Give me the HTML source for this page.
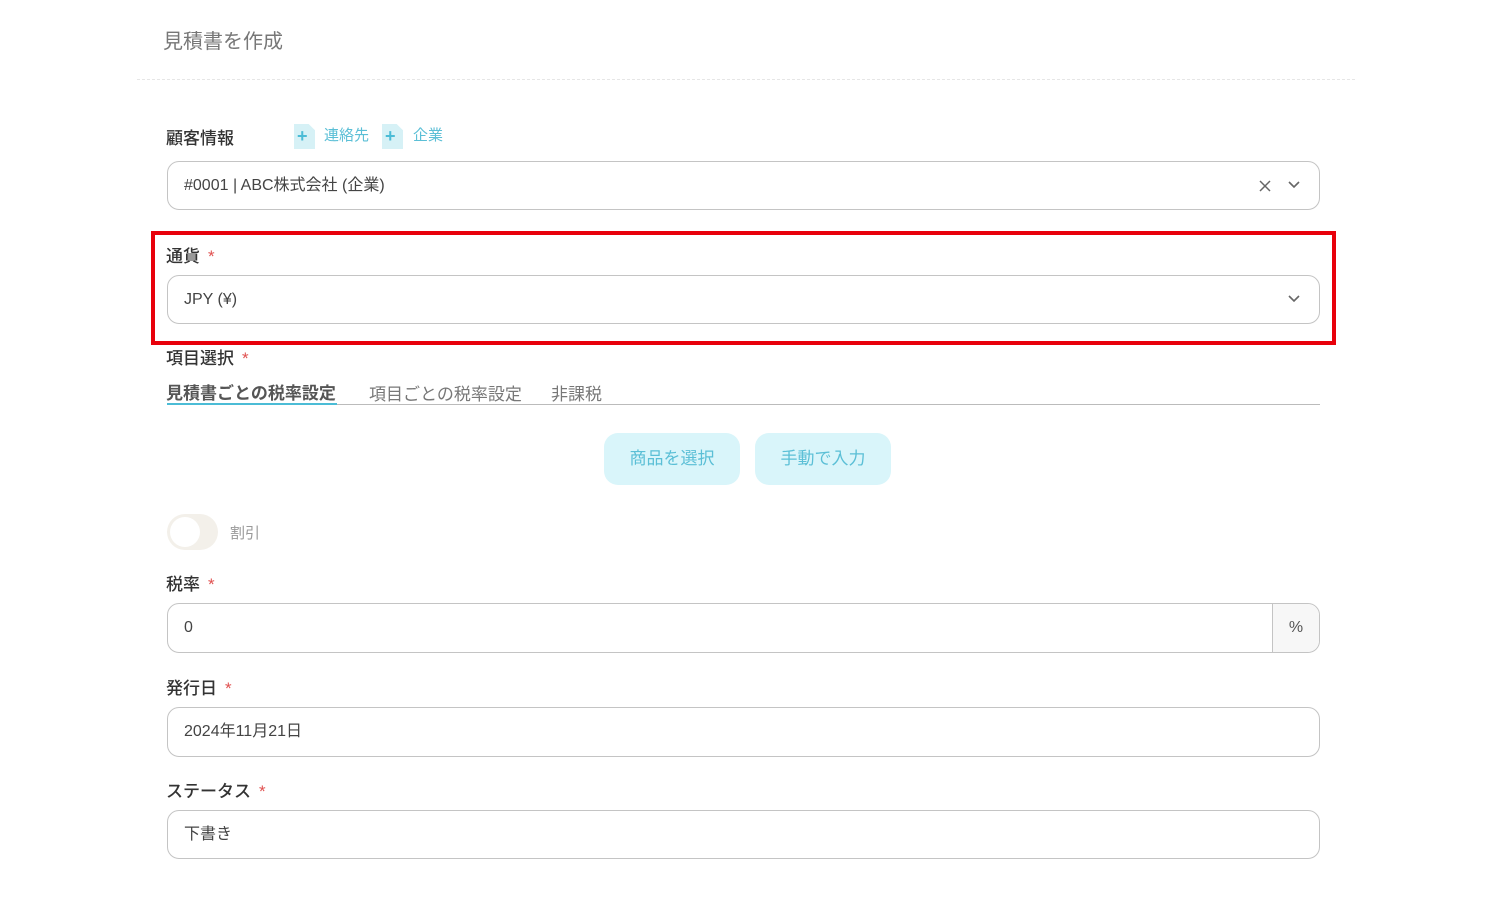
<!DOCTYPE html>
<html><head><meta charset="utf-8"><style>
*{box-sizing:border-box;margin:0;padding:0}
body{width:1500px;height:902px;background:#fff;font-family:"Liberation Sans","Noto Sans CJK JP",sans-serif;position:relative;overflow:hidden;color:#333}
.a{position:absolute}
.lbl{font-size:17px;color:#333;font-weight:500}
.req{color:#e0504f;margin-left:8px}
.inp{position:absolute;left:167px;width:1153px;height:49px;border:1px solid #c4c4c4;border-radius:12px;font-size:16px;color:#444;padding-left:16px;line-height:47px}
.chev{position:absolute;right:18px;top:17px}
.btn{position:absolute;top:433px;width:136px;height:52px;background:#d9f5fa;border-radius:14px;color:#5bbfd6;font-size:17px;text-align:center;line-height:52px}
</style></head><body>
<div class="a" style="left:163px;top:25px;font-size:20px;color:#777">見積書を作成</div>
<div class="a" style="left:137px;top:79px;width:1218px;border-top:1px dashed #e6e6e6"></div>

<div class="a lbl" style="left:166px;top:124px">顧客情報</div>
<div class="a" style="left:294px;top:124px;width:21px;height:25px;background:#d6f1f6;clip-path:polygon(0 0,70% 0,100% 25%,100% 100%,0 100%)"></div>
<div class="a" style="left:297px;top:126px;font-size:18px;color:#4bbcd6;font-weight:bold">+</div>
<div class="a" style="left:324px;top:124px;font-size:15px;color:#5bbfd6">連絡先</div>
<div class="a" style="left:382px;top:124px;width:21px;height:25px;background:#d6f1f6;clip-path:polygon(0 0,70% 0,100% 25%,100% 100%,0 100%)"></div>
<div class="a" style="left:385px;top:126px;font-size:18px;color:#4bbcd6;font-weight:bold">+</div>
<div class="a" style="left:413px;top:124px;font-size:15px;color:#5bbfd6">企業</div>

<div class="inp" style="top:161px">#0001 | ABC株式会社 (企業)
<svg class="a" style="right:48px;top:18px" width="12" height="12" viewBox="0 0 12 12"><path d="M1 1L11 11M11 1L1 11" stroke="#666" stroke-width="1.5"/></svg>
<svg class="chev" width="14" height="10" viewBox="0 0 14 10"><path d="M2 3l5 5 5-5" stroke="#666" stroke-width="1.6" fill="none"/></svg></div>

<div class="a" style="left:151px;top:231px;width:1185px;height:114px;border:4px solid #e8000b"></div>
<div class="a lbl" style="left:166px;top:242px">通貨<span class="req">*</span></div>
<div class="inp" style="top:275px">JPY (¥)
<svg class="chev" width="14" height="10" viewBox="0 0 14 10"><path d="M2 3l5 5 5-5" stroke="#666" stroke-width="1.6" fill="none"/></svg></div>

<div class="a lbl" style="left:166px;top:344px">項目選択<span class="req">*</span></div>
<div class="a" style="left:166px;top:379px;font-size:17px;color:#555;font-weight:bold">見積書ごとの税率設定</div>
<div class="a" style="left:369px;top:380px;font-size:17px;color:#777">項目ごとの税率設定</div>
<div class="a" style="left:551px;top:380px;font-size:17px;color:#777">非課税</div>
<div class="a" style="left:167px;top:404px;width:1153px;border-top:1px solid #bbb"></div>
<div class="a" style="left:167px;top:403px;width:170px;border-top:2px solid #4bbcd6"></div>

<div class="btn" style="left:604px">商品を選択</div>
<div class="btn" style="left:755px">手動で入力</div>

<div class="a" style="left:167px;top:514px;width:51px;height:36px;border-radius:18px;background:#f3f0ea"></div>
<div class="a" style="left:170px;top:517px;width:30px;height:30px;border-radius:50%;background:#fff"></div>
<div class="a" style="left:230px;top:522px;font-size:15px;color:#999">割引</div>

<div class="a lbl" style="left:166px;top:570px">税率<span class="req">*</span></div>
<div class="inp" style="top:603px;height:50px">0
<div class="a" style="right:0;top:0;width:47px;height:48px;border-left:1px solid #c4c4c4;background:#f7f7f7;border-radius:0 12px 12px 0;text-align:center;color:#555">%</div></div>

<div class="a lbl" style="left:166px;top:674px">発行日<span class="req">*</span></div>
<div class="inp" style="top:707px;height:50px">2024年11月21日</div>

<div class="a lbl" style="left:166px;top:777px">ステータス<span class="req">*</span></div>
<div class="inp" style="top:810px;height:49px">下書き</div>
</body></html>
